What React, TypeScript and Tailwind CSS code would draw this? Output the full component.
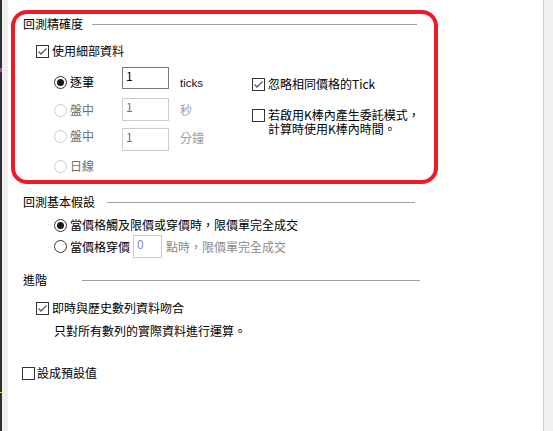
import React from "react";

const F = "font-['Noto_Sans_CJK_TC',sans-serif] text-[12px] leading-[16px]";

function Check({ checked }: { checked?: boolean }) {
  return (
    <div className="w-[13px] h-[13px] shrink-0 border border-[#333333] bg-white flex items-center justify-center">
      {checked && (
        <svg width="11" height="11" viewBox="0 0 11 11">
          <path d="M1.5 5.5 L4 8 L9.5 2.5" fill="none" stroke="#5a5a5a" strokeWidth="1.3" />
        </svg>
      )}
    </div>
  );
}

function Radio({ checked, disabled }: { checked?: boolean; disabled?: boolean }) {
  return (
    <div
      className={
        "w-[13px] h-[13px] shrink-0 rounded-full border bg-white flex items-center justify-center " +
        (disabled ? "border-[#cccccc]" : "border-[#333333]")
      }
    >
      {checked && <div className="w-[7px] h-[7px] rounded-full bg-[#1a1a1a]" />}
    </div>
  );
}

function Heading({ text, tw, w }: { text: string; tw: string; w: string }) {
  return (
    <div className={"flex items-center h-[16px] " + w}>
      <span className={"shrink-0 text-black " + tw}>{text}</span>
      <div className="flex-1 h-px bg-[#a0a0a0]" />
    </div>
  );
}

export default function App() {
  return (
    <div className={"relative flex w-[553px] h-[431px] overflow-hidden bg-white " + F}>
      <div className="w-[2px] shrink-0 bg-[#2e2e2e] flex flex-col">
        <div className="mt-[68px] h-[4px] bg-[#b040b0]" />
        <div className="mt-[320px] h-[1px] bg-[#d8d820]" />
      </div>
      <div className="w-[6px] shrink-0 bg-[#eeeeee]" />
      <div className="flex-1 flex flex-col pl-[15px] pt-[16px] text-black">
        <Heading text="回測精確度" tw="w-[69px]" w="w-[394px]" />
        <div className="ml-[13px] mt-[11px] flex items-center gap-[3px] h-[16px]">
          <Check checked />
          <span>使用細部資料</span>
        </div>
        <div className="ml-[31px] mt-[8px] flex">
          <div className="w-[198px] flex flex-col">
            <div className="flex items-start h-[22px]">
              <div className="w-[68px] mt-[7px] flex items-center gap-[3px] h-[16px]">
                <Radio checked />
                <span>逐筆</span>
              </div>
              <div className="w-[47px] h-[22px] border border-[#7a7a7a] pl-[3px] text-black">1</div>
              <span className="ml-[11px] mt-[8px] font-['Liberation_Sans',sans-serif] text-[11.5px] text-[#101030]">ticks</span>
            </div>
            <div className="mt-[9px] flex items-start h-[23px]">
              <div className="w-[68px] mt-[4px] flex items-center gap-[3px] h-[16px]">
                <Radio disabled />
                <span className="text-[#6d6d6d]">盤中</span>
              </div>
              <div className="w-[47px] h-[23px] border border-[#cccccc] pl-[3px] text-[#7a6a8a]">1</div>
              <span className="ml-[11px] mt-[4px] text-[#a0a0a0]">秒</span>
            </div>
            <div className="mt-[7px] flex items-start h-[23px]">
              <div className="w-[68px] flex items-center gap-[3px] h-[16px]">
                <Radio disabled />
                <span className="text-[#6d6d6d]">盤中</span>
              </div>
              <div className="w-[47px] h-[23px] border border-[#cccccc] pl-[3px] text-[#7a6a8a]">1</div>
              <span className="ml-[11px] mt-[2px] text-[#a0a0a0]">分鐘</span>
            </div>
            <div className="mt-[7px] flex items-center gap-[3px] h-[16px]">
              <Radio disabled />
              <span className="text-[#6d6d6d]">日線</span>
            </div>
          </div>
          <div className="flex flex-col">
            <div className="mt-[9px] flex items-center gap-[3px] h-[16px]">
              <Check checked />
              <span>忽略相同價格的Tick</span>
            </div>
            <div className="mt-[16px] flex items-start gap-[3px]">
              <div className="mt-[1px]">
                <Check />
              </div>
              <span className="leading-[14px]">
                若啟用K棒內產生委託模式，
                <br />
                計算時使用K棒內時間。
              </span>
            </div>
          </div>
        </div>

        <div className="mt-[20px]">
          <Heading text="回測基本假設" tw="w-[84px]" w="w-[392px]" />
        </div>
        <div className="ml-[31px] mt-[7px] flex items-center gap-[3px] h-[16px]">
          <Radio checked />
          <span>當價格觸及限價或穿價時，限價單完全成交</span>
        </div>
        <div className="ml-[31px] mt-[2px] flex items-center h-[23px]">
          <div className="flex items-center gap-[3px]">
            <Radio />
            <span>當價格穿價</span>
          </div>
          <div className="ml-[3px] w-[29px] h-[23px] border border-[#cccccc] pl-[3px] text-[#8090b0]">0</div>
          <span className="ml-[4px] text-[#8a8a8a]">點時，限價單完全成交</span>
        </div>

        <div className="mt-[14px]">
          <Heading text="進階" tw="w-[59px]" w="w-[397px]" />
        </div>
        <div className="ml-[13px] mt-[12px] flex items-center gap-[3px] h-[16px]">
          <Check checked />
          <span>即時與歷史數列資料吻合</span>
        </div>
        <div className="ml-[31px] mt-[7px] h-[16px]">只對所有數列的實際資料進行運算。</div>
        <div className="-ml-[1px] mt-[26px] flex items-center gap-[2px] h-[16px]">
          <Check />
          <span>設成預設值</span>
        </div>
      </div>
      <div className="w-px shrink-0 bg-[#cfcfcf]" />
      <div className="w-[9px] shrink-0 bg-[#f0f0f0]" />

      <div className="absolute left-[11px] top-[10px] w-[427px] h-[174px] border-[4px] border-[#ed1c24] rounded-[16px] pointer-events-none" />
    </div>
  );
}
